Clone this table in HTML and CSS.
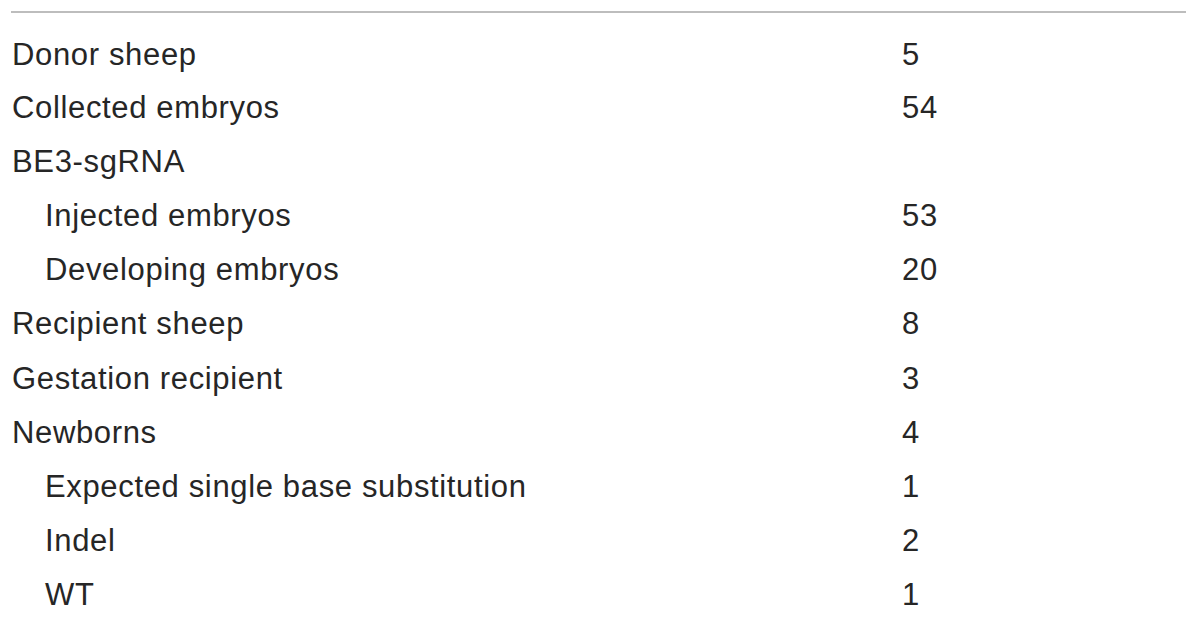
FILE: index.html
```html
<!DOCTYPE html>
<html>
<head>
<meta charset="utf-8">
<link rel="stylesheet" href="styles.css">
</head>
<body>
<table class="data">
  <colgroup><col class="c1"><col class="c2"></colgroup>
  <tbody>
    <tr class="first"><td class="label">Donor sheep</td><td class="num">5</td></tr>
    <tr><td class="label">Collected embryos</td><td class="num">54</td></tr>
    <tr><td class="label">BE3-sgRNA</td><td class="num"></td></tr>
    <tr><td class="label sub">Injected embryos</td><td class="num">53</td></tr>
    <tr><td class="label sub">Developing embryos</td><td class="num">20</td></tr>
    <tr><td class="label">Recipient sheep</td><td class="num">8</td></tr>
    <tr><td class="label">Gestation recipient</td><td class="num">3</td></tr>
    <tr><td class="label">Newborns</td><td class="num">4</td></tr>
    <tr><td class="label sub">Expected single base substitution</td><td class="num">1</td></tr>
    <tr><td class="label sub">Indel</td><td class="num">2</td></tr>
    <tr><td class="label sub">WT</td><td class="num">1</td></tr>
  </tbody>
</table>
</body>
</html>
```

FILE: styles.css
```css
html, body {
  margin: 0;
  padding: 0;
  background: #ffffff;
}
body {
  padding: 11px 14px 0 11px;
  font-family: "Liberation Sans", Arial, sans-serif;
  color: #262626;
}
.data {
  width: 1175px;
  table-layout: fixed;
  border-collapse: collapse;
  border-top: 2px solid #bdbdbd;
}
.c1 { width: 891px; }
.c2 { width: 284px; }
.data td {
  height: 54.1px;
  padding: 0;
  font-size: 31px;
  letter-spacing: 0.65px;
  vertical-align: middle;
  line-height: 34px;
  box-sizing: border-box;
  white-space: nowrap;
}
.data tr.first td {
  height: 69px;
  padding-top: 15px;
}
.label {
  padding-left: 1px !important;
}
.label.sub {
  padding-left: 34px !important;
}
```
